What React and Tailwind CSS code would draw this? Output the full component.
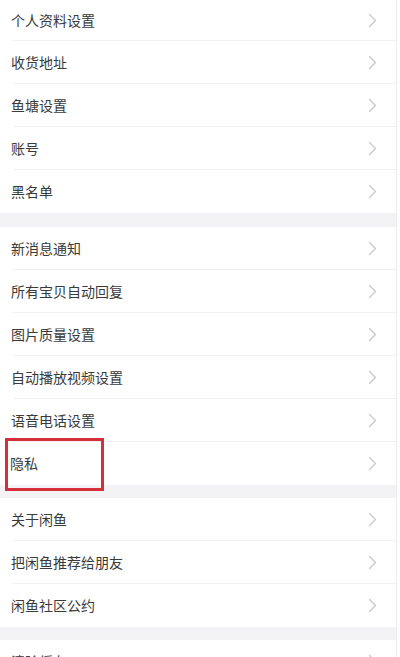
import React from "react";

function Chevron() {
  return (
    <svg width="9" height="15" viewBox="0 0 9 15" className="mr-[19px] shrink-0">
      <path d="M1.5 1.5 L7.5 7.5 L1.5 13.5" fill="none" stroke="#c9c9cc" strokeWidth="1.4" strokeLinecap="round" strokeLinejoin="round" />
    </svg>
  );
}

function Row({ label, last, h = "h-[43px]", highlight }) {
  return (
    <div className={`relative flex items-center justify-between shrink-0 ${h}`}>
      <span className={`${highlight ? "pl-[10px]" : "pl-[11px]"} text-[14px] text-[#3a3a3a]`}>{label}</span>
      <Chevron />
      {!last && <div className="absolute bottom-0 left-[13px] right-0 h-px bg-[#f0f0f2]" />}
      {highlight && (
        <div className="absolute left-[5px] top-[-4px] w-[99px] h-[53px] border-[3px] border-[#d5303a] z-10" />
      )}
    </div>
  );
}

function Gap({ h }) {
  return <div className={`${h} shrink-0 bg-[#f3f3f5]`} />;
}

export default function App() {
  return (
    <div
      className="w-[400px] h-[657px] overflow-hidden bg-white flex items-start"
      style={{ fontFamily: '"Noto Sans CJK SC", "Noto Sans", sans-serif' }}
    >
      <div className="w-[396px] flex flex-col shrink-0">
        <Row label="个人资料设置" h="h-[41px]" />
        <Row label="收货地址" />
        <Row label="鱼塘设置" />
        <Row label="账号" />
        <Row label="黑名单" last />
        <Gap h="h-[14px]" />
        <Row label="新消息通知" />
        <Row label="所有宝贝自动回复" />
        <Row label="图片质量设置" />
        <Row label="自动播放视频设置" />
        <Row label="语音电话设置" />
        <Row label="隐私" last highlight />
        <Gap h="h-[13px]" />
        <Row label="关于闲鱼" />
        <Row label="把闲鱼推荐给朋友" />
        <Row label="闲鱼社区公约" last />
        <Gap h="h-[13px]" />
        <Row label="清除缓存" />
      </div>
      <div className="flex-1 self-stretch border-l border-[#ececee] bg-white" />
    </div>
  );
}
